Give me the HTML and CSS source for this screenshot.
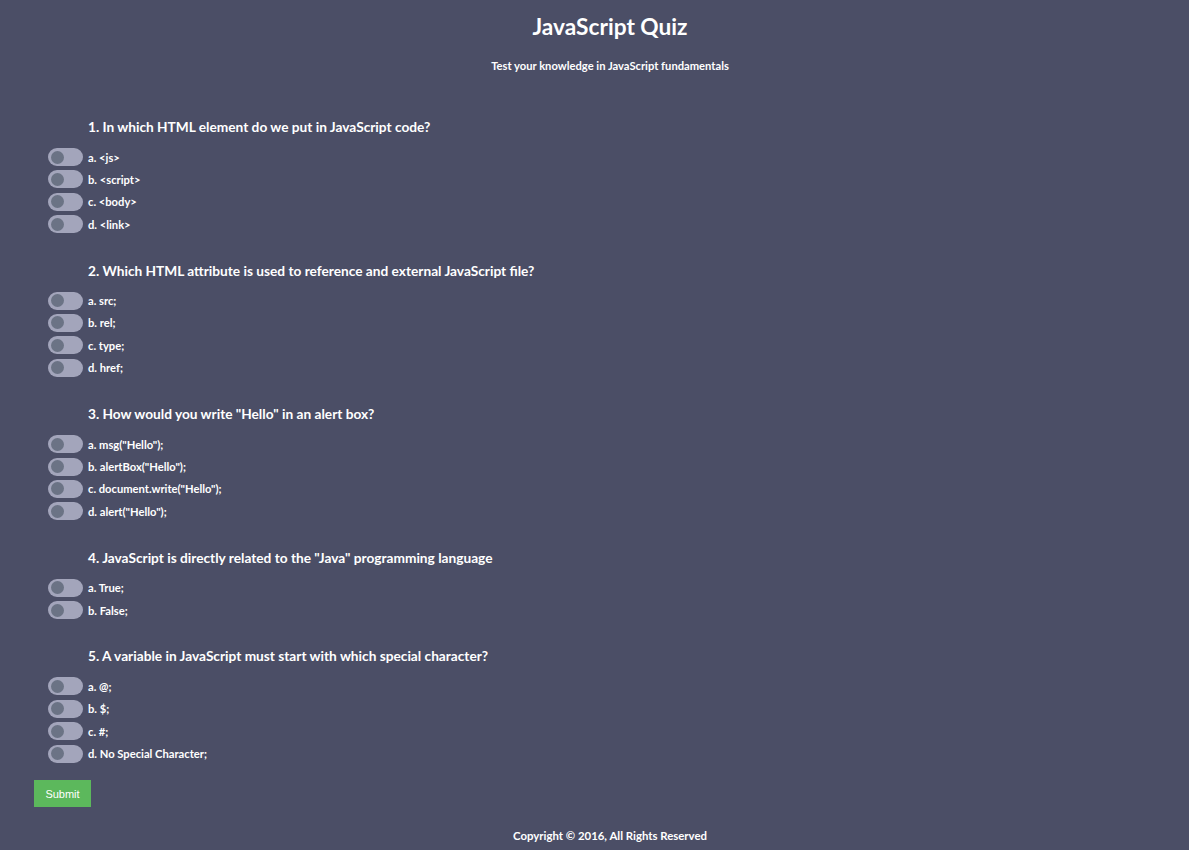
FILE: index.html
```html
<!DOCTYPE html>
<html lang="en">
<head>
<meta charset="utf-8">
<title>JavaScript Quiz</title>
<link rel="stylesheet" href="styles.css">
</head>
<body>
<header class="header">
  <h1 class="title">JavaScript Quiz</h1>
  <p class="subtitle">Test your knowledge in JavaScript fundamentals</p>
</header>
<form class="quiz">
  <section class="question">
    <h3 class="q-text">1. In which HTML element do we put in JavaScript code?</h3>
    <label class="option"><span class="toggle"><span class="knob"></span></span><span>a. &lt;js&gt;</span></label>
    <label class="option"><span class="toggle"><span class="knob"></span></span><span>b. &lt;script&gt;</span></label>
    <label class="option"><span class="toggle"><span class="knob"></span></span><span>c. &lt;body&gt;</span></label>
    <label class="option"><span class="toggle"><span class="knob"></span></span><span>d. &lt;link&gt;</span></label>
  </section>
  <section class="question">
    <h3 class="q-text">2. Which HTML attribute is used to reference and external JavaScript file?</h3>
    <label class="option"><span class="toggle"><span class="knob"></span></span><span>a. src;</span></label>
    <label class="option"><span class="toggle"><span class="knob"></span></span><span>b. rel;</span></label>
    <label class="option"><span class="toggle"><span class="knob"></span></span><span>c. type;</span></label>
    <label class="option"><span class="toggle"><span class="knob"></span></span><span>d. href;</span></label>
  </section>
  <section class="question">
    <h3 class="q-text">3. How would you write "Hello" in an alert box?</h3>
    <label class="option"><span class="toggle"><span class="knob"></span></span><span>a. msg("Hello");</span></label>
    <label class="option"><span class="toggle"><span class="knob"></span></span><span>b. alertBox("Hello");</span></label>
    <label class="option"><span class="toggle"><span class="knob"></span></span><span>c. document.write("Hello");</span></label>
    <label class="option"><span class="toggle"><span class="knob"></span></span><span>d. alert("Hello");</span></label>
  </section>
  <section class="question">
    <h3 class="q-text">4. JavaScript is directly related to the "Java" programming language</h3>
    <label class="option"><span class="toggle"><span class="knob"></span></span><span>a. True;</span></label>
    <label class="option"><span class="toggle"><span class="knob"></span></span><span>b. False;</span></label>
  </section>
  <section class="question">
    <h3 class="q-text">5. A variable in JavaScript must start with which special character?</h3>
    <label class="option"><span class="toggle"><span class="knob"></span></span><span>a. @;</span></label>
    <label class="option"><span class="toggle"><span class="knob"></span></span><span>b. $;</span></label>
    <label class="option"><span class="toggle"><span class="knob"></span></span><span>c. #;</span></label>
    <label class="option"><span class="toggle"><span class="knob"></span></span><span>d. No Special Character;</span></label>
  </section>
  <button type="button" class="submit">Submit</button>
</form>
<footer class="footer">Copyright © 2016, All Rights Reserved</footer>
</body>
</html>
```
FILE: styles.css
```css
html, body {
  margin: 0;
  padding: 0;
}
body {
  background: #4b4e66;
  color: #ffffff;
  font-family: "Lato", "Liberation Sans", sans-serif;
  min-height: 850px;
}
.header {
  text-align: center;
  padding: 12px 0 0 31px;
}
.title {
  margin: 0;
  font-size: 22.7px;
  line-height: 30px;
  font-weight: 700;
}
.subtitle {
  margin: 16px 0 0;
  font-size: 11.2px;
  line-height: 16px;
  font-weight: 700;
}
.quiz {
  padding: 44px 0 0 34px;
  display: flex;
  flex-direction: column;
  align-items: flex-start;
}
.question {
  display: flex;
  flex-direction: column;
  padding-left: 14px;
  margin-bottom: 24px;
}
.q-text {
  margin: 0 0 12px 40px;
  font-size: 13.7px;
  line-height: 18px;
  font-weight: 700;
}
.option {
  display: flex;
  align-items: center;
  gap: 5px;
  height: 18px;
  margin-bottom: 4.4px;
  font-size: 11.2px;
  font-weight: 700;
}
.toggle {
  width: 35px;
  height: 18px;
  border-radius: 9px;
  background: #a3a5bb;
  display: flex;
  align-items: center;
  padding-left: 3px;
  box-sizing: border-box;
}
.knob {
  width: 13px;
  height: 13px;
  border-radius: 50%;
  background: #6b7385;
}
.submit {
  margin-top: -11px;
  width: 57px;
  height: 27px;
  border: none;
  background: #5cb85c;
  color: #ffffff;
  font-family: "Liberation Sans", Arial, sans-serif;
  font-size: 11px;
  padding: 0;
}
.footer {
  text-align: center;
  font-size: 11.4px;
  font-weight: 700;
  line-height: 16px;
  margin-top: 21px;
  padding-left: 31px;
}
```
